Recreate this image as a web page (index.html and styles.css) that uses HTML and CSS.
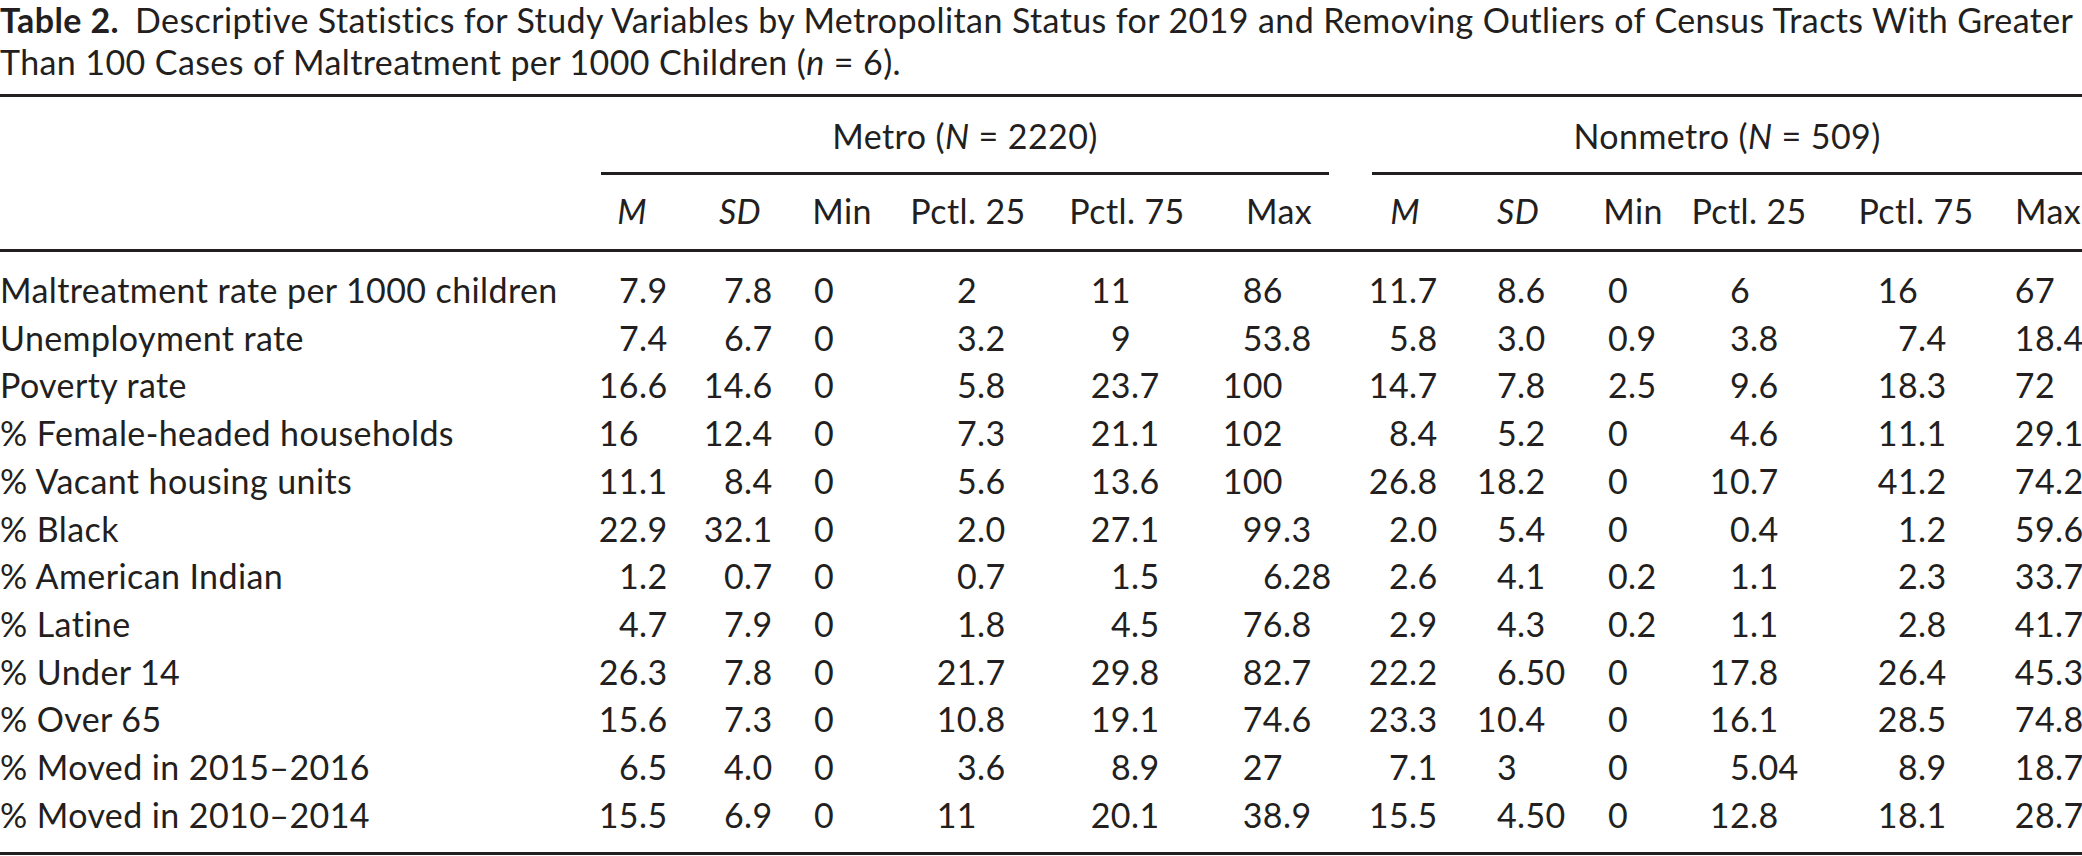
FILE: index.html
```html
<!DOCTYPE html>
<html lang="en">
<head>
<meta charset="utf-8">
<title>Table 2</title>
<link rel="stylesheet" href="styles.css">
</head>
<body>
<div class="caption">
  <div class="cap-line"><span class="cap-label">Table 2.</span>Descriptive Statistics for Study Variables by Metropolitan Status for 2019 and Removing Outliers of Census Tracts With Greater</div>
  <div class="cap-line">Than 100 Cases of Maltreatment per 1000 Children (<i>n</i> = 6).</div>
</div>
<table class="stats">
  <colgroup>
    <col style="width:580px">
    <col style="width:59px"><col style="width:45px">
    <col style="width:60px"><col style="width:52px">
    <col style="width:38px"><col style="width:54px">
    <col style="width:89px"><col style="width:71px">
    <col style="width:83px"><col style="width:75px">
    <col style="width:77px"><col style="width:69px">
    <col style="width:8px">
    <col style="width:49px"><col style="width:41px">
    <col style="width:67px"><col style="width:69px">
    <col style="width:42px"><col style="width:52px">
    <col style="width:70px"><col style="width:68px">
    <col style="width:100px"><col style="width:96px">
    <col style="width:41px"><col style="width:27px">
  </colgroup>
  <thead>
    <tr class="grp-row">
      <th></th>
      <th colspan="12"><div class="grp grp-metro">Metro (<i>N</i> = 2220)</div></th>
      <th></th>
      <th colspan="12"><div class="grp grp-non">Nonmetro (<i>N</i> = 509)</div></th>
    </tr>
    <tr class="sub-row">
      <th></th>
      <th colspan="2"><i>M</i></th><th colspan="2"><i>SD</i></th><th colspan="2">Min</th><th colspan="2">Pctl. 25</th><th colspan="2">Pctl. 75</th><th colspan="2">Max</th>
      <th></th>
      <th colspan="2"><i>M</i></th><th colspan="2"><i>SD</i></th><th colspan="2">Min</th><th colspan="2">Pctl. 25</th><th colspan="2">Pctl. 75</th><th colspan="2">Max</th>
    </tr>
  </thead>
  <tbody id="rows"></tbody>
</table>
<script src="app.js"></script>
</body>
</html>
```

FILE: app.js
```javascript
var data = [
  ["Maltreatment rate per 1000 children", "7.9 7.8 0 2 11 86", "11.7 8.6 0 6 16 67"],
  ["Unemployment rate", "7.4 6.7 0 3.2 9 53.8", "5.8 3.0 0.9 3.8 7.4 18.4"],
  ["Poverty rate", "16.6 14.6 0 5.8 23.7 100", "14.7 7.8 2.5 9.6 18.3 72"],
  ["% Female-headed households", "16 12.4 0 7.3 21.1 102", "8.4 5.2 0 4.6 11.1 29.1"],
  ["% Vacant housing units", "11.1 8.4 0 5.6 13.6 100", "26.8 18.2 0 10.7 41.2 74.2"],
  ["% Black", "22.9 32.1 0 2.0 27.1 99.3", "2.0 5.4 0 0.4 1.2 59.6"],
  ["% American Indian", "1.2 0.7 0 0.7 1.5 6.28", "2.6 4.1 0.2 1.1 2.3 33.7"],
  ["% Latine", "4.7 7.9 0 1.8 4.5 76.8", "2.9 4.3 0.2 1.1 2.8 41.7"],
  ["% Under 14", "26.3 7.8 0 21.7 29.8 82.7", "22.2 6.50 0 17.8 26.4 45.3"],
  ["% Over 65", "15.6 7.3 0 10.8 19.1 74.6", "23.3 10.4 0 16.1 28.5 74.8"],
  ["% Moved in 2015\u20132016", "6.5 4.0 0 3.6 8.9 27", "7.1 3 0 5.04 8.9 18.7"],
  ["% Moved in 2010\u20132014", "15.5 6.9 0 11 20.1 38.9", "15.5 4.50 0 12.8 18.1 28.7"]
];

function cells(str) {
  return str.split(" ").map(function (v) {
    var p = v.indexOf(".");
    var ip = p < 0 ? v : v.slice(0, p);
    var fp = p < 0 ? "" : v.slice(p);
    return '<td class="i">' + ip + '</td><td class="f">' + fp + '</td>';
  }).join("");
}

var html = data.map(function (r) {
  return '<tr><td class="label">' + r[0] + '</td>' + cells(r[1]) + '<td></td>' + cells(r[2]) + '</tr>';
}).join("");
document.getElementById("rows").innerHTML = html;
```

FILE: styles.css
```css
html, body {
  margin: 0;
  padding: 0;
  background: #ffffff;
  overflow: hidden;
}

body {
  width: 2082px;
  font-family: Lato, "Open Sans", "DejaVu Sans", sans-serif;
  font-size: 34px;
  letter-spacing: 0.4px;
  color: #231f20;
}

.caption {
  margin-top: -1px;
  line-height: 42px;
}

.cap-line {
  white-space: nowrap;
}

.cap-label {
  font-weight: 700;
  margin-right: 16px;
}

.stats {
  width: 2082px;
  table-layout: fixed;
  border-collapse: separate;
  border-spacing: 0;
  margin-top: 11px;
  border-top: 3px solid #231f20;
  border-bottom: 3px solid #231f20;
}

.stats th {
  font-weight: 400;
  padding: 0;
  white-space: nowrap;
}

.grp-row th {
  vertical-align: bottom;
}

.grp {
  padding-top: 19px;
  padding-bottom: 16px;
  line-height: 40px;
  border-bottom: 3px solid #231f20;
  text-align: center;
}

.grp-metro {
  margin-left: 21px;
  margin-right: 23px;
}

.grp-non {
  margin-left: 12px;
}

.sub-row th {
  padding-top: 16px;
  padding-bottom: 18px;
  line-height: 40px;
  border-bottom: 3px solid #231f20;
  text-align: center;
}

.stats td {
  padding: 0;
  line-height: 47.7px;
  white-space: nowrap;
}

.stats tbody tr:first-child td {
  padding-top: 14px;
}

.stats tbody tr:last-child td {
  padding-bottom: 14px;
}

.stats td.label {
  text-align: left;
}

.stats td.i {
  text-align: right;
}

.stats td.f {
  text-align: left;
}
```
